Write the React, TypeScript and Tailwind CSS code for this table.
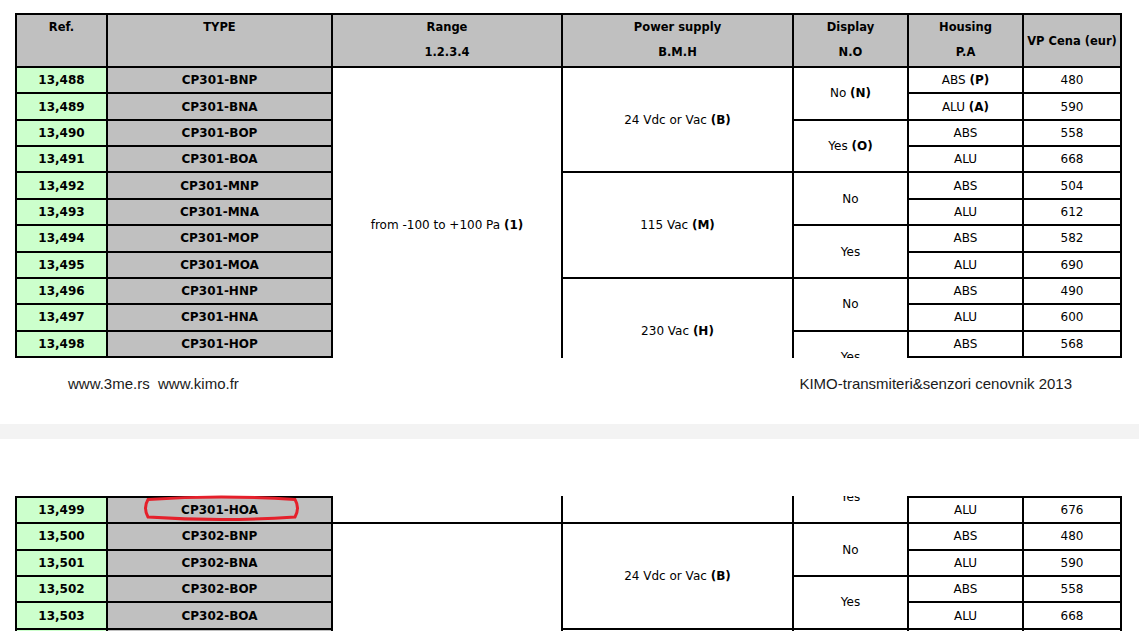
import type { ReactNode } from 'react';

type Span = { text: ReactNode; span: number };

type Row = {
  ref: string;
  type: string;
  range?: Span;
  power?: Span;
  display?: Span;
  housing: ReactNode;
  price: number;
};

const B = ({ children }: { children: ReactNode }) => <span className="font-bold">{children}</span>;

const rows: Row[] = [
  { ref: '13,488', type: 'CP301-BNP', range: { text: <>from -100 to +100 Pa <B>(1)</B></>, span: 12 }, power: { text: <>24 Vdc or Vac <B>(B)</B></>, span: 4 }, display: { text: <>No <B>(N)</B></>, span: 2 }, housing: <>ABS <B>(P)</B></>, price: 480 },
  { ref: '13,489', type: 'CP301-BNA', housing: <>ALU <B>(A)</B></>, price: 590 },
  { ref: '13,490', type: 'CP301-BOP', display: { text: <>Yes <B>(O)</B></>, span: 2 }, housing: 'ABS', price: 558 },
  { ref: '13,491', type: 'CP301-BOA', housing: 'ALU', price: 668 },
  { ref: '13,492', type: 'CP301-MNP', power: { text: <>115 Vac <B>(M)</B></>, span: 4 }, display: { text: 'No', span: 2 }, housing: 'ABS', price: 504 },
  { ref: '13,493', type: 'CP301-MNA', housing: 'ALU', price: 612 },
  { ref: '13,494', type: 'CP301-MOP', display: { text: 'Yes', span: 2 }, housing: 'ABS', price: 582 },
  { ref: '13,495', type: 'CP301-MOA', housing: 'ALU', price: 690 },
  { ref: '13,496', type: 'CP301-HNP', power: { text: <>230 Vac <B>(H)</B></>, span: 4 }, display: { text: 'No', span: 2 }, housing: 'ABS', price: 490 },
  { ref: '13,497', type: 'CP301-HNA', housing: 'ALU', price: 600 },
  { ref: '13,498', type: 'CP301-HOP', display: { text: 'Yes', span: 2 }, housing: 'ABS', price: 568 },
  { ref: '13,499', type: 'CP301-HOA', housing: 'ALU', price: 676 },
  { ref: '13,500', type: 'CP302-BNP', range: { text: <>from -1000 to +1000 Pa <B>(2)</B></>, span: 12 }, power: { text: <>24 Vdc or Vac <B>(B)</B></>, span: 4 }, display: { text: 'No', span: 2 }, housing: 'ABS', price: 480 },
  { ref: '13,501', type: 'CP302-BNA', housing: 'ALU', price: 590 },
  { ref: '13,502', type: 'CP302-BOP', display: { text: 'Yes', span: 2 }, housing: 'ABS', price: 558 },
  { ref: '13,503', type: 'CP302-BOA', housing: 'ALU', price: 668 },
  { ref: '13,504', type: 'CP302-MNP', power: { text: <>115 Vac <B>(M)</B></>, span: 4 }, display: { text: 'No', span: 2 }, housing: 'ABS', price: 504 },
  { ref: '13,505', type: 'CP302-MNA', housing: 'ALU', price: 612 },
  { ref: '13,506', type: 'CP302-MOP', display: { text: 'Yes', span: 2 }, housing: 'ABS', price: 582 },
  { ref: '13,507', type: 'CP302-MOA', housing: 'ALU', price: 690 },
  { ref: '13,508', type: 'CP302-HNP', power: { text: <>230 Vac <B>(H)</B></>, span: 4 }, display: { text: 'No', span: 2 }, housing: 'ABS', price: 490 },
  { ref: '13,509', type: 'CP302-HNA', housing: 'ALU', price: 600 },
  { ref: '13,510', type: 'CP302-HOP', display: { text: 'Yes', span: 2 }, housing: 'ABS', price: 568 },
  { ref: '13,511', type: 'CP302-HOA', housing: 'ALU', price: 676 },
];

const cell = 'border-2 border-black text-center p-0';

// the whole price table; each "page" shows a clipped slice of it
const PriceTable = () => (
  <table className="ml-[2px] w-[1105px] table-fixed border-collapse text-[12px] text-black">
    <colgroup>
      <col className="w-[91px]" />
      <col className="w-[225px]" />
      <col className="w-[230px]" />
      <col className="w-[231px]" />
      <col className="w-[115px]" />
      <col className="w-[115px]" />
      <col className="w-[98px]" />
    </colgroup>
    <thead>
      <tr className="h-[53px] bg-[#c0c0c0] text-[11.5px] font-bold leading-[25px]">
        <th className={`${cell} align-top`}>Ref.</th>
        <th className={`${cell} align-top`}>TYPE</th>
        <th className={`${cell} align-top`}>Range<br />1.2.3.4</th>
        <th className={`${cell} align-top`}>Power supply<br />B.M.H</th>
        <th className={`${cell} align-top`}>Display<br />N.O</th>
        <th className={`${cell} align-top`}>Housing<br />P.A</th>
        <th className={`${cell} align-middle leading-[16px]`}>VP Cena (eur)</th>
      </tr>
    </thead>
    <tbody>
      {rows.map((r) => (
        <tr key={r.ref} className="h-[26.36px]">
          <td className={`${cell} bg-[#ccffcc] font-bold`}>{r.ref}</td>
          <td className={`${cell} bg-[#c0c0c0] font-bold`}>{r.type}</td>
          {r.range && <td rowSpan={r.range.span} className={`${cell} bg-white`}>{r.range.text}</td>}
          {r.power && <td rowSpan={r.power.span} className={`${cell} bg-white`}>{r.power.text}</td>}
          {r.display && <td rowSpan={r.display.span} className={`${cell} bg-white`}>{r.display.text}</td>}
          <td className={`${cell} bg-white`}>{r.housing}</td>
          <td className={`${cell} bg-white`}>{r.price}</td>
        </tr>
      ))}
    </tbody>
  </table>
);

export default function App() {
  return (
    <div className="h-[631px] overflow-hidden bg-white font-['DejaVu_Sans',sans-serif]">
      {/* page 1 */}
      <div className="h-[424px] pt-[13px]">
        <div className="ml-[13px] h-[345px] w-[1112px] overflow-hidden">
          <PriceTable />
        </div>
        <div className="mt-[17px] flex justify-between pl-[68px] pr-[67px] font-['Liberation_Sans',Arial,sans-serif] text-[15px] leading-[18px] text-[#1a1a1a]">
          <span className="whitespace-pre">www.3me.rs  www.kimo.fr</span>
          <span>KIMO-transmiteri&amp;senzori cenovnik 2013</span>
        </div>
      </div>

      {/* gap between pages */}
      <div className="h-[15px] bg-[#f3f3f3]" />

      {/* page 2 */}
      <div className="relative h-[192px] pt-[57px]">
        <div className="ml-[13px] h-[135px] w-[1112px] overflow-hidden">
          <div className="mt-[-343px]">
            <PriceTable />
          </div>
        </div>
        <svg className="absolute left-[141px] top-[56px]" width="161" height="27" viewBox="0 0 161 27" fill="none">
          <path d="M7 4.5 Q80 -0.5 154 4.5 Q159 13 154 22 Q80 27 7 22 Q2 13 7 4.5 Z" stroke="#e5202b" strokeWidth="3" />
        </svg>
      </div>
    </div>
  );
}
